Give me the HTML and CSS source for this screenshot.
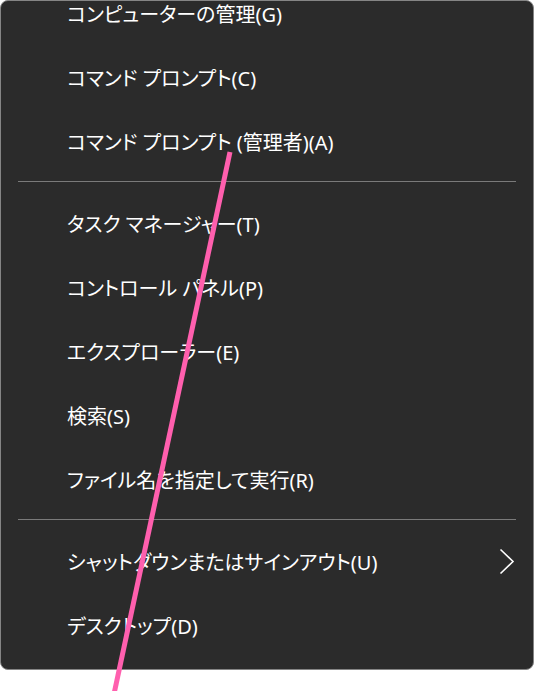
FILE: index.html
```html
<!DOCTYPE html>
<html lang="ja">
<head>
<meta charset="utf-8">
<link rel="stylesheet" href="styles.css">
</head>
<body>
<div class="menu">
  <div class="item first">コンピューターの管理(G)</div>
  <div class="item">コマンド プロンプト(C)</div>
  <div class="item">コマンド プロンプト (管理者)(A)</div>
  <div class="sep"></div>
  <div class="item">タスク マネージャー(T)</div>
  <div class="item">コントロール パネル(P)</div>
  <div class="item">エクスプローラー(E)</div>
  <div class="item">検索(S)</div>
  <div class="item">ファイル名を指定して実行(R)</div>
  <div class="sep"></div>
  <div class="item sub"><span>シャットダウンまたはサインアウト(U)</span><svg class="chev" width="16" height="28" viewBox="0 0 16 28"><path d="M1.5 1.5 L14 13.5 L1.5 25.5" fill="none" stroke="#ffffff" stroke-width="1.6"/></svg></div>
  <div class="item">デスクトップ(D)</div>
</div>
<svg class="pen" width="534" height="691" viewBox="0 0 534 691"><line x1="230" y1="152" x2="114" y2="694" stroke="#ff5fae" stroke-width="5"/></svg>
</body>
</html>
```
FILE: styles.css
```css
html, body {
  margin: 0;
  padding: 0;
  background: #ffffff;
}
body {
  width: 534px;
  height: 691px;
  position: relative;
  overflow: hidden;
  font-family: "Noto Sans", "Noto Sans CJK JP", sans-serif;
}
.menu {
  box-sizing: border-box;
  width: 534px;
  height: 670px;
  background: #2b2b2b;
  border: 1px solid #858585;
  border-radius: 8px;
  overflow: hidden;
  padding-bottom: 10px;
  display: flex;
  flex-direction: column;
}
.item {
  flex: none;
  height: 64px;
  display: flex;
  align-items: center;
  padding-left: 66px;
  padding-right: 18px;
  color: #ffffff;
  font-size: 20px;
  font-weight: 400;
  font-feature-settings: "palt" 1;
  line-height: 1;
  white-space: nowrap;
}
.item.first {
  margin-top: -18px;
}
.item.sub {
  justify-content: space-between;
}
.chev {
  display: block;
  margin-top: -2px;
}
.sep {
  flex: none;
  height: 18px;
  box-sizing: border-box;
  padding-top: 6px;
  margin: 0 17px 0 17px;
}
.sep::before {
  content: "";
  display: block;
  height: 1px;
  background: #7a7a7a;
}
.pen {
  position: absolute;
  left: 0;
  top: 0;
}
```
